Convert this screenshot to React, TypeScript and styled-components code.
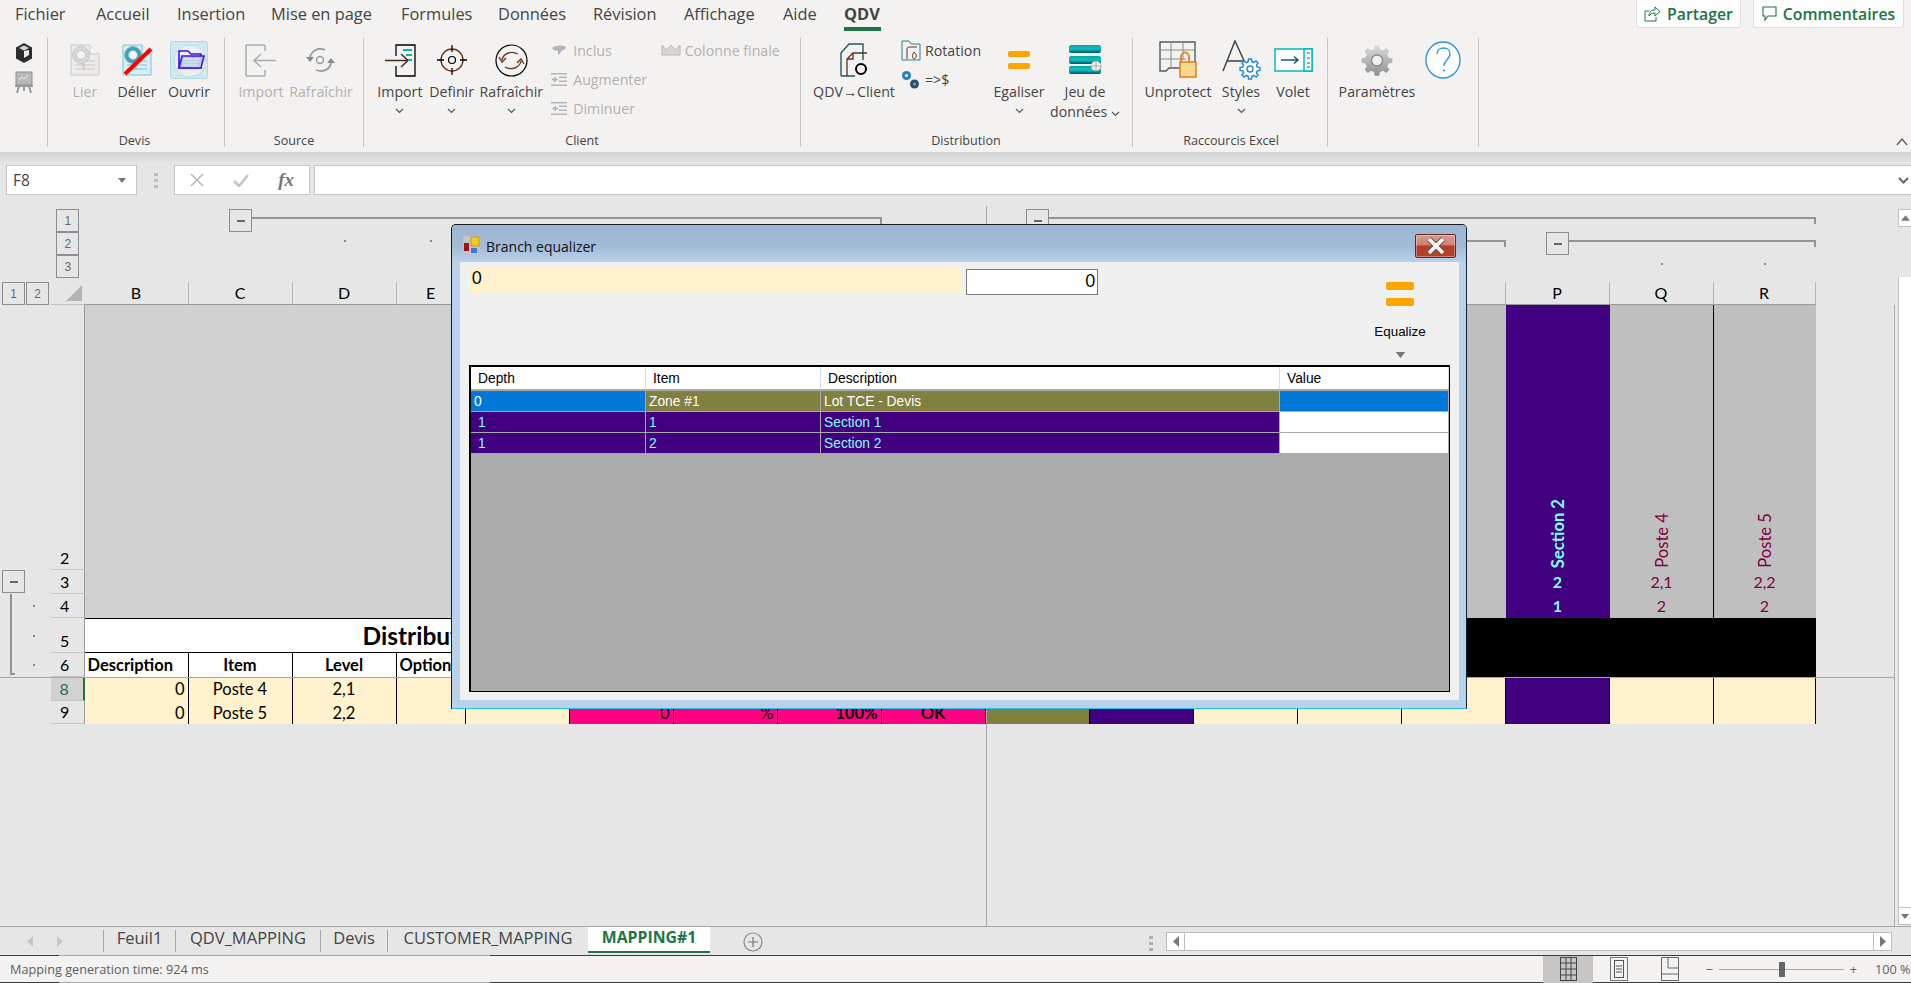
import React from "react";
import styled, { createGlobalStyle } from "styled-components";

const UI = '"Open Sans","Noto Sans",sans-serif';
const CELL = '"Lato","Liberation Sans",sans-serif';
const WIN = '"Liberation Sans",Arial,sans-serif';
const GREEN = "#217346";
const PURPLE = "#400080";
const OLIVE = "#808040";
const PINK = "#ff0080";
const CREAM = "#fff2cc";
const CYAN = "#80ffff";
const CRIMSON = "#800040";

const Global = createGlobalStyle`
  html, body { margin: 0; padding: 0; height: 100%; overflow: hidden; background: #e6e6e6; }
  #root { height: 100%; }
  * { box-sizing: border-box; }
`;

const Page = styled.div`
  position: relative;
  width: 1911px;
  height: 983px;
  display: flex;
  flex-direction: column;
  font-family: ${UI};
  overflow: hidden;
  background: #e6e6e6;
`;

/* ---------- top bar ---------- */
const TopBar = styled.header`
  height: 152px;
  flex: none;
  background: #f3f2f1;
  display: flex;
  flex-direction: column;
`;
const TabRow = styled.nav`
  height: 36px;
  display: flex;
  padding: 0 7px 0 15px;
`;
const MenuTab = styled.div<{ $w: number; $on?: boolean }>`
  width: ${(p) => p.$w}px;
  height: 28px;
  font-size: 16.4px;
  line-height: 27px;
  color: #444;
  font-weight: ${(p) => (p.$on ? 700 : 400)};
  position: relative;
  white-space: nowrap;
  ${(p) => p.$on && `&::after{content:"";position:absolute;left:0;top:27px;width:37px;height:4px;background:${GREEN};}`}
`;
const ShareButton = styled.div<{ $w: number; $first?: boolean }>`
  width: ${(p) => p.$w}px;
  height: 28px;
  margin-left: ${(p) => (p.$first ? "auto" : "12px")};
  background: #fdfdfd;
  border: 1px solid #e1dfdd;
  border-top: none;
  border-radius: 0 0 3px 3px;
  display: flex;
  align-items: center;
  justify-content: center;
  gap: 6px;
  color: ${GREEN};
  font-size: 15.8px;
  font-weight: 600;
  white-space: nowrap;
`;

/* ---------- ribbon ---------- */
const Ribbon = styled.div`
  height: 111px;
  padding-top: 2px;
  display: flex;
`;
const MiniColumn = styled.div`
  width: 48px;
  height: 109px;
  border-right: 1px solid #c8c6c4;
  display: flex;
  flex-direction: column;
  align-items: center;
`;
const MiniIcon = styled.div`
  height: 29px;
  width: 48px;
  display: flex;
  align-items: center;
  justify-content: center;
`;
const Group = styled.section<{ $w: number; $pad: number }>`
  width: ${(p) => p.$w}px;
  height: 109px;
  padding-left: ${(p) => p.$pad}px;
  border-right: 1px solid #c8c6c4;
  display: flex;
  flex-direction: column;
`;
const GroupBody = styled.div`
  display: flex;
  flex: none;
  height: 94px;
`;
const GroupLabel = styled.div<{ $shift?: number }>`
  flex: none;
  height: 15px;
  font-size: 12.6px;
  line-height: 17px;
  color: #444;
  text-align: center;
  white-space: nowrap;
  transform: translateX(${(p) => p.$shift || 0}px);
`;
const BigButton = styled.div<{ $w: number; $off?: boolean }>`
  width: ${(p) => p.$w}px;
  display: flex;
  flex-direction: column;
  align-items: center;
  color: ${(p) => (p.$off ? "#b3b0ad" : "#444")};
  font-size: 14.2px;
`;
const BigIcon = styled.div`
  height: 44px;
  width: 100%;
  display: flex;
  align-items: center;
  justify-content: center;
`;
const BigLabel = styled.div`
  line-height: 20px;
  height: 20px;
  white-space: nowrap;
  text-align: center;
`;
const ChevronRow = styled.div`
  height: 17px;
  display: flex;
  align-items: center;
  justify-content: center;
`;
const SmallColumn = styled.div<{ $w: number; $gap?: number }>`
  width: ${(p) => p.$w}px;
  margin-left: ${(p) => p.$gap || 0}px;
  margin-top: -2px;
  display: flex;
  flex-direction: column;
`;
const SmallItem = styled.div<{ $off?: boolean }>`
  height: 29px;
  display: flex;
  align-items: center;
  gap: 4px;
  font-size: 14.2px;
  color: ${(p) => (p.$off ? "#b3b0ad" : "#444")};
  white-space: nowrap;
`;
const SmallGlyph = styled.span`
  width: 20px;
  display: flex;
  justify-content: center;
  flex: none;
`;
const Collapse = styled.div`
  margin-left: auto;
  margin-right: 3px;
  align-self: flex-end;
  padding-bottom: 1px;
  display: flex;
`;

/* ---------- formula bar ---------- */
const FormulaBar = styled.div`
  height: 43px;
  flex: none;
  padding: 13px 0 0 6px;
  display: flex;
  background: linear-gradient(#d2d2d2, #e6e6e6 12px);
`;
const NameBox = styled.div`
  width: 131px;
  height: 30px;
  background: #fff;
  border: 1px solid #c8c6c4;
  display: flex;
  align-items: center;
  justify-content: space-between;
  padding: 0 10px 0 6px;
  font-size: 15.5px;
  color: #444;
`;
const GripSlot = styled.div`
  width: 37px;
  height: 30px;
  display: flex;
  align-items: center;
  justify-content: center;
`;
const FxBox = styled.div`
  width: 136px;
  height: 30px;
  background: #fff;
  border: 1px solid #c8c6c4;
  display: flex;
  align-items: center;
  justify-content: space-between;
  padding: 0 15px;
  margin-right: 4px;
`;
const FormulaInput = styled.div`
  flex: 1;
  height: 30px;
  background: #fdfdfd;
  border: 1px solid #c8c6c4;
  border-right: none;
  display: flex;
  align-items: center;
  justify-content: flex-end;
  padding-right: 2px;
`;
const FxText = styled.span`
  font-family: "Liberation Serif", serif;
  font-style: italic;
  font-weight: 700;
  font-size: 19px;
  color: #777;
`;

/* ---------- sheet ---------- */
const SheetRow = styled.div`
  flex: 1;
  display: flex;
  min-height: 0;
`;
const Sheet = styled.div`
  width: 1895px;
  display: grid;
  grid-template-columns: 51px 33.5px 104px 104px 104px 69px repeat(12, 104px) 102px 1fr;
  grid-template-rows: 14px 23px 23px 23px 4px 23px 265px 24px 24px 35px 24px 24px 23px 1fr;
  font-family: ${CELL};
`;
type Place = { $c: number | string; $r: number | string };
const OutlineBox = styled.div<Place & { $left?: number }>`
  grid-column: ${(p) => p.$c};
  grid-row: ${(p) => p.$r};
  width: 23px;
  height: 23px;
  margin-left: ${(p) => (p.$left === undefined ? "auto" : p.$left + "px")};
  margin-right: ${(p) => (p.$left === undefined ? "auto" : "0")};
  border: 1px solid #8d8d93;
  background: #e6e6e6;
  color: #666;
  font: 12px ${WIN};
  display: flex;
  align-items: center;
  justify-content: center;
  z-index: 2;
`;
const RowLevels = styled.div`
  grid-column: 1;
  grid-row: 6;
  display: flex;
  gap: 1px;
  padding-left: 2px;
`;
const LevelBtn = styled(OutlineBox).attrs({ $c: "auto", $r: "auto", $left: 0 })``;
const MinusMark = styled.span`
  width: 8px;
  height: 2px;
  background: #666;
`;
const Bracket = styled.div<Place & { $inset: number }>`
  grid-column: ${(p) => p.$c};
  grid-row: ${(p) => p.$r};
  margin: 8px 0 0 ${(p) => p.$inset}px;
  height: 7px;
  border-top: 2px solid #949494;
  border-right: 2px solid #949494;
`;
const LevelDot = styled.div<Place>`
  grid-column: ${(p) => p.$c};
  grid-row: ${(p) => p.$r};
  width: 2px;
  height: 2px;
  background: #8a8a8a;
  margin: 8px auto 0;
`;
const RowDot = styled.div<{ $r: number }>`
  grid-column: 1;
  grid-row: ${(p) => p.$r};
  width: 2px;
  height: 2px;
  background: #8a8a8a;
  margin: auto 0 auto 33px;
`;
const RowBracket = styled.div`
  grid-column: 1;
  grid-row: 9 / 12;
  margin: 0 0 2px 10px;
  width: 5px;
  border-left: 2px solid #949494;
  border-bottom: 2px solid #949494;
`;
const Corner = styled.div`
  grid-column: 2;
  grid-row: 6;
  display: flex;
  align-items: center;
  justify-content: flex-end;
  padding-right: 3px;
  border-bottom: 1px solid #c0c0c0;
`;
const ColHead = styled.div<{ $c: number }>`
  grid-column: ${(p) => p.$c};
  grid-row: 6;
  border-right: 1px solid #b4b4b4;
  border-bottom: 1px solid #9a9a9a;
  font-size: 16px;
  color: #000;
  text-align: center;
  line-height: 21px;
`;
const RowHead = styled.div<{ $r: number; $on?: boolean }>`
  grid-column: 2;
  grid-row: ${(p) => p.$r};
  border-right: ${(p) => (p.$on ? `2px solid ${GREEN}` : "1px solid #9a9a9a")};
  border-bottom: 1px solid #c6c6c6;
  background: ${(p) => (p.$on ? "#d2d2d2" : "transparent")};
  color: ${(p) => (p.$on ? GREEN : "#000")};
  font-size: 16px;
  text-align: center;
  padding-right: 5px;
  display: flex;
  align-items: flex-end;
  justify-content: center;
  line-height: 22px;
`;
const Block = styled.div<Place & { $bg: string; $lineRight?: boolean }>`
  grid-column: ${(p) => p.$c};
  grid-row: ${(p) => p.$r};
  background: ${(p) => p.$bg};
  ${(p) => p.$lineRight && "border-right: 1px solid #000;"}
`;
const Value = styled.div<{ $c: number; $r: number; $color: string; $bold?: boolean }>`
  grid-column: ${(p) => p.$c};
  grid-row: ${(p) => p.$r};
  color: ${(p) => p.$color};
  font-size: 16px;
  font-weight: ${(p) => (p.$bold ? 700 : 400)};
  text-align: center;
  line-height: 24px;
`;
const VerticalLabel = styled.div<{ $c: number; $color: string; $bold?: boolean }>`
  grid-column: ${(p) => p.$c};
  grid-row: 7;
  display: flex;
  justify-content: center;
  align-items: flex-end;
  padding-bottom: 2px;
  span {
    writing-mode: vertical-rl;
    transform: rotate(180deg);
    color: ${(p) => p.$color};
    font-size: 16.6px;
    font-weight: ${(p) => (p.$bold ? 700 : 400)};
    white-space: nowrap;
  }
`;
const TitleCell = styled.div`
  grid-column: 3 / 12;
  grid-row: 10;
  background: #fff;
  border-top: 1px solid #000;
  border-bottom: 1px solid #000;
  padding-left: 278px;
  font-size: 24.5px;
  font-weight: 700;
  color: #000;
  line-height: 33px;
  white-space: nowrap;
`;
const HeadCell = styled.div<{ $c: number; $left?: boolean }>`
  grid-column: ${(p) => p.$c};
  grid-row: 11;
  background: #fff;
  border-right: 1px solid #000;
  font-size: 16.5px;
  font-weight: 700;
  color: #000;
  line-height: 24px;
  text-align: ${(p) => (p.$left ? "left" : "center")};
  padding-left: ${(p) => (p.$left ? "3px" : "0")};
  white-space: nowrap;
  overflow: hidden;
`;
const DataCell = styled.div<{ $c: number; $r: number; $bg: string; $align?: string; $bold?: boolean }>`
  grid-column: ${(p) => p.$c};
  grid-row: ${(p) => p.$r};
  background: ${(p) => p.$bg};
  border-right: 1px solid #000;
  font-size: 16.5px;
  font-weight: ${(p) => (p.$bold ? 700 : 400)};
  color: #000;
  line-height: 24px;
  text-align: ${(p) => p.$align || "center"};
  padding: 0 3px;
  white-space: nowrap;
`;
const SplitH = styled.div`
  grid-column: 1 / -1;
  grid-row: 12;
  height: 1px;
  background: #a6a6a6;
  z-index: 1;
`;
const SplitV = styled.div`
  grid-column: 12;
  grid-row: 1 / -1;
  width: 1px;
  margin-top: 11px;
  background: #a6a6a6;
  z-index: 1;
`;
const SheetEdge = styled.div`
  grid-column: 20;
  grid-row: 7 / -1;
  border-right: 1px solid #b0b0b0;
`;
const VScroll = styled.aside`
  width: 16px;
  padding: 14px 0 1px 3px;
  display: flex;
  flex-direction: column;
`;
const VArrow = styled.div`
  height: 18px;
  flex: none;
  background: #fff;
  border: 1px solid #c0c0c0;
  border-right: none;
  display: flex;
  align-items: center;
  justify-content: center;
`;
const VGap = styled.div`
  height: 50px;
  flex: none;
  background: #e6e6e6;
`;
const VThumb = styled.div`
  flex: 1;
  background: #fff;
  border-left: 1px solid #c0c0c0;
`;

/* ---------- sheet tabs ---------- */
const SheetTabs = styled.div`
  height: 29px;
  flex: none;
  border-top: 1px solid #a6a6a6;
  display: flex;
  background: #e6e6e6;
  padding-right: 19px;
`;
const NavArrows = styled.div`
  width: 103px;
  display: flex;
  align-items: center;
  gap: 24px;
  padding-left: 27px;
`;
const SheetTab = styled.div<{ $w: number; $on?: boolean }>`
  width: ${(p) => p.$w}px;
  height: ${(p) => (p.$on ? "26px" : "22px")};
  margin-top: ${(p) => (p.$on ? "0" : "3px")};
  border-left: ${(p) => (p.$on ? "none" : "1px solid #a6a6a6")};
  border-bottom: ${(p) => (p.$on ? `2px solid ${GREEN}` : "none")};
  background: ${(p) => (p.$on ? "#fff" : "transparent")};
  color: ${(p) => (p.$on ? GREEN : "#444")};
  font-weight: ${(p) => (p.$on ? 700 : 400)};
  font-size: ${(p) => (p.$on ? 15.8 : 16.5)}px;
  line-height: ${(p) => (p.$on ? "21px" : "16px")};
  text-align: center;
  white-space: nowrap;
`;
const AddSheet = styled.div`
  width: 20px;
  height: 20px;
  margin: 5px 0 0 33px;
`;
const Grip = styled.div`
  margin: 7px 13px 0 auto;
`;
const HScroll = styled.div`
  width: 726px;
  height: 19px;
  margin-top: 5px;
  background: #fff;
  border: 1px solid #bdbdbd;
  display: flex;
  justify-content: space-between;
`;
const HArrow = styled.div<{ $right?: boolean }>`
  width: 18px;
  display: flex;
  align-items: center;
  justify-content: center;
  ${(p) => (p.$right ? "border-left: 1px solid #bdbdbd;" : "border-right: 1px solid #bdbdbd;")}
`;

/* ---------- status bar ---------- */
const StatusBar = styled.footer`
  height: 28px;
  flex: none;
  background: #f3f2f1;
  border-top: 1px solid #d8d8d8;
  border-bottom: 1px solid;
  border-image: linear-gradient(to right, #3c3c3c 60px, #a8a8a8 60px, #a8a8a8 490px, #3c3c3c 490px) 1;
  display: flex;
  align-items: center;
  padding-left: 10px;
  font-size: 12.7px;
  color: #605e5c;
`;
const ViewButton = styled.div<{ $on?: boolean; $first?: boolean }>`
  width: ${(p) => (p.$on ? 50 : 51)}px;
  height: 27px;
  margin-left: ${(p) => (p.$first ? "auto" : "0")};
  background: ${(p) => (p.$on ? "#c8c6c4" : "transparent")};
  display: flex;
  align-items: center;
  justify-content: center;
`;
const ZoomControl = styled.div`
  display: flex;
  align-items: center;
  margin-left: 10px;
  gap: 6px;
`;
const ZoomTrack = styled.div`
  width: 125px;
  height: 1px;
  background: #a6a6a6;
  position: relative;
`;
const ZoomThumb = styled.span`
  position: absolute;
  left: 60px;
  top: -7px;
  width: 6px;
  height: 15px;
  background: #666;
`;
const ZoomText = styled.div`
  width: 54px;
  padding-left: 18px;
  white-space: nowrap;
`;

/* ---------- dialog ---------- */
const Dialog = styled.div`
  position: absolute;
  left: 451px;
  top: 224px;
  width: 1016px;
  height: 485px;
  background: #b9d1ea;
  border: 1px solid #1a1a1a;
  border-bottom: 1px solid #25c4e4;
  border-right: 1px solid #123;
  border-radius: 5px 5px 0 0;
  display: flex;
  flex-direction: column;
  z-index: 5;
`;
const DialogTitle = styled.div`
  height: 37px;
  flex: none;
  display: flex;
  align-items: center;
  padding: 0 10px 0 11px;
  gap: 6px;
  background: linear-gradient(#9bb5d2, #a4bcd7 60%, #b9d1ea);
  border-radius: 4px 4px 0 0;
  font-size: 14px;
  color: #111;
`;
const TitleText = styled.span`
  padding-top: 5px;
`;
const TitleGlyph = styled.span`
  padding-top: 3px;
  display: flex;
`;
const CloseButton = styled.div`
  margin-left: auto;
  width: 41px;
  height: 24px;
  margin-top: 4px;
  border: 1px solid #5b2b2b;
  border-radius: 2px;
  background: linear-gradient(#dd9a90, #cf8070 45%, #b53d24 50%, #b5412a);
  box-shadow: inset 0 0 0 1px rgba(255, 255, 255, 0.35);
  display: flex;
  align-items: center;
  justify-content: center;
`;
const DialogBody = styled.div`
  flex: 1;
  margin: 0 7px 8px 8px;
  background: #f0f0f0;
  padding: 6px 9px 8px;
  display: flex;
  flex-direction: column;
  font-family: ${WIN};
`;
const DialogTop = styled.div`
  height: 97px;
  flex: none;
  display: flex;
  align-items: flex-start;
`;
const NameLabel = styled.div`
  width: 493px;
  height: 25px;
  background: ${CREAM};
  padding-left: 3px;
  font: 16.5px/21px ${CELL};
  color: #000;
`;
const ValueInput = styled.div`
  width: 132px;
  height: 26px;
  margin: 1px 0 0 4px;
  background: #fff;
  border: 1px solid #7a7a7a;
  font: 16.5px/23px ${CELL};
  text-align: right;
  padding-right: 2px;
  color: #000;
`;
const EqualizeButton = styled.div`
  margin-left: auto;
  margin-right: 20px;
  width: 60px;
  display: flex;
  flex-direction: column;
  align-items: center;
  font-size: 13.4px;
  color: #000;
`;
const EqualizeIcon = styled.div`
  height: 56px;
  padding-top: 14px;
`;
const EqualizeLabel = styled.div`
  height: 16px;
  line-height: 16px;
`;
const EqualizeCaret = styled.div`
  margin-top: 6px;
`;
const GridView = styled.div`
  flex: 1;
  background: #ababab;
  border: 2px solid #000;
  border-bottom-width: 1px;
  border-right-width: 1px;
  font-size: 13.8px;
`;
const GridRow = styled.div<{ $head?: boolean }>`
  display: grid;
  grid-template-columns: 175px 175px 459px 169px;
  height: ${(p) => (p.$head ? 24 : 21)}px;
  border-bottom: ${(p) => (p.$head ? 2 : 1)}px solid #a9a9a9;
`;
const HeaderCell = styled.div`
  height: 22px;
  overflow: hidden;
  background: #fff;
  color: #000;
  border-right: 1px solid #ddd;
  padding-left: 7px;
  line-height: 24px;
`;
const RowCell = styled.div<{ $bg: string; $color: string; $pad?: number }>`
  height: 20px;
  overflow: hidden;
  background: ${(p) => p.$bg};
  color: ${(p) => p.$color};
  border-right: 1px solid #a9a9a9;
  padding-left: ${(p) => p.$pad ?? 3}px;
  line-height: 21px;
  white-space: nowrap;
`;

/* ---------- icons ---------- */
function gear(cx: number, cy: number, R: number, r: number, n: number) {
  const pts: string[] = [];
  for (let i = 0; i < n; i++) {
    const a = (i / n) * Math.PI * 2;
    const s = (Math.PI * 2) / n;
    const at = (rad: number, ang: number) =>
      `${(cx + rad * Math.cos(ang)).toFixed(2)},${(cy + rad * Math.sin(ang)).toFixed(2)}`;
    pts.push(at(r, a - s * 0.32), at(R, a - s * 0.18), at(R, a + s * 0.18), at(r, a + s * 0.32));
  }
  return pts.join(" ");
}

const Chevron = () => (
  <svg width="9" height="6" viewBox="0 0 9 6">
    <path d="M1 1l3.5 3.5L8 1" fill="none" stroke="#555" strokeWidth="1.2" />
  </svg>
);
const Cube = () => (
  <svg width="18" height="22" viewBox="0 0 18 22">
    <path d="M9 1l8 4.5v11L9 21l-8-4.5v-11z" fill="#2d2d2d" />
    <path d="M4 6l5-2.5L14 6 9 8.5z" fill="#d8d8d8" />
    <path d="M9 9v7l5-3V8z" fill="#eee" />
  </svg>
);
const BoardIcon = () => (
  <svg width="20" height="22" viewBox="0 0 20 22">
    <rect x="2" y="1" width="16" height="13" fill="#b9b9b9" stroke="#8e8e8e" />
    <path d="M5 9l3-3 2 2 4-4" stroke="#eee" fill="none" />
    <path d="M1 15h18M5 15l-2 7M15 15l2 7M10 15v5" stroke="#9a9a9a" strokeWidth="2" fill="none" />
  </svg>
);
const DocBase = ({ paper, edge, lens, children }: { paper: string; edge: string; lens: string; children?: React.ReactNode }) => (
  <svg width="32" height="32" viewBox="0 0 32 32">
    <path d="M2 1h19l9 9v21H2z" fill={paper} stroke={edge} />
    <path d="M21 1v9h9" fill="#f4f4f4" stroke={edge} />
    <path d="M6 17h20M6 21h20M6 25h20" stroke={edge} />
    <circle cx="12" cy="11" r="8.5" fill={lens} stroke={edge} />
    <circle cx="12" cy="11" r="4.5" fill="#f4f4f4" stroke={edge} />
    <path d="M14 19l1 7" stroke={edge} strokeWidth="2" />
    {children}
  </svg>
);
const LierIcon = () => <DocBase paper="#eeecea" edge="#c9c9c9" lens="#d8d8d8" />;
const DelierIcon = () => (
  <DocBase paper="#d8f0f5" edge="#7fc4cf" lens="#3f9fb0">
    <path d="M4 30L30 5" stroke="#f00" strokeWidth="4" />
  </DocBase>
);
const OpenIcon = () => (
  <svg width="38" height="38" viewBox="0 0 38 38">
    <rect x="0.5" y="0.5" width="37" height="37" rx="2" fill="#cdeaf0" stroke="#aedbe2" />
    <circle cx="20" cy="20" r="16" fill="#e9eff2" stroke="#c8d8dc" />
    <path d="M9 27V10h9l3 3h10v14z" fill="#eee" stroke="#3b12e8" strokeWidth="1.6" />
    <path d="M9 27l3-12h22l-3 12z" fill="#b7cbe8" stroke="#3b12e8" strokeWidth="1.6" />
    <path d="M14 18h16M13 21h16M12 24h16" stroke="#e4eef6" />
  </svg>
);
const ImportOff = () => (
  <svg width="32" height="33" viewBox="0 0 32 33">
    <path d="M20 1H1v31h19M20 1v6M20 26v6" fill="none" stroke="#8a8a8a" />
    <path d="M31 16.5H10M16 10l-7 6.5 7 6.5" fill="none" stroke="#aaa" strokeWidth="1.4" />
  </svg>
);
const RefreshOff = () => (
  <svg width="32" height="28" viewBox="0 0 32 28">
    <circle cx="15" cy="14" r="3.5" fill="none" stroke="#9a9a9a" strokeWidth="1.4" />
    <path d="M5 12C6 5 13 1 20 4" fill="none" stroke="#9a9a9a" strokeWidth="1.8" />
    <path d="M26 17c-1 6-8 10-15 7" fill="none" stroke="#9a9a9a" strokeWidth="1.8" />
    <path d="M1 11h8l-4 5zM22 17h8l-4-5z" fill="#8a8a8a" />
  </svg>
);
const ImportOn = () => (
  <svg width="32" height="33" viewBox="0 0 32 33">
    <path d="M12 12V1h19v31H12V22" fill="none" stroke="#000" strokeWidth="1.3" />
    <path d="M1 16.5h23M17 10l7 6.5-7 6.5" fill="none" stroke="#4a2a1a" strokeWidth="1.5" />
    <path d="M19 5h9v2h-9zM22 10h6v2h-6zM24 15h4v2h-4z" fill="#00b8b8" />
  </svg>
);
const TargetIcon = () => (
  <svg width="32" height="32" viewBox="0 0 32 32">
    <circle cx="16" cy="16" r="11" fill="none" stroke="#6b3a1e" strokeWidth="1.4" />
    <circle cx="16" cy="16" r="3.5" fill="none" stroke="#000" strokeWidth="1.2" />
    <path d="M16 1v7M16 24v7M1 16h7M24 16h7" stroke="#000" strokeWidth="1.3" />
  </svg>
);
const RefreshOn = () => (
  <svg width="33" height="33" viewBox="0 0 33 33">
    <circle cx="16.5" cy="16.5" r="15.5" fill="none" stroke="#000" strokeWidth="1.2" />
    <path d="M7 16c1-6 9-10 16-6" fill="none" stroke="#6b3a1e" strokeWidth="1.4" />
    <path d="M26 17c-1 6-9 10-16 6" fill="none" stroke="#6b3a1e" strokeWidth="1.4" />
    <path d="M4 13l3 5 4-4M22 19l4-4 3 5" fill="none" stroke="#6b3a1e" strokeWidth="1.4" />
  </svg>
);
const CapIcon = () => (
  <svg width="16" height="12" viewBox="0 0 16 12">
    <path d="M1 3c4-3 10-3 14-1-1 3-3 3-5 4 0 2-2 3-3 4V6C4 6 2 5 1 3z" fill="#b5b5b5" />
  </svg>
);
const IndentIcon = ({ out }: { out?: boolean }) => (
  <svg width="16" height="15" viewBox="0 0 16 15">
    <path d="M0 1h16v1.6H0zM0 12.4h16V14H0zM8 4.5h8V6H8zM8 8.5h8V10H8z" fill="#b5b5b5" />
    <path d={out ? "M1 7.5L5 4.5v2h2v2H5v2z" : "M7 7.5L3 4.5v2H1v2h2v2z"} fill="#b5b5b5" />
  </svg>
);
const CrownIcon = () => (
  <svg width="20" height="13" viewBox="0 0 20 13">
    <path d="M1 1l4 5 5-5 5 5 4-5v10H1z" fill="#d8d6d4" stroke="#b5b5b5" />
  </svg>
);
const QdvClientIcon = () => (
  <svg width="30" height="34" viewBox="0 0 30 34">
    <path d="M2 33V10l8-9h14v16M2 33h14" fill="none" stroke="#1e5a66" strokeWidth="1.4" />
    <path d="M8 33V16l6-6h14M8 16h6v-6" fill="none" stroke="#5a3520" strokeWidth="1.3" />
    <circle cx="22" cy="26" r="5" fill="none" stroke="#000" strokeWidth="2" />
  </svg>
);
const RotationIcon = () => (
  <svg width="20" height="21" viewBox="0 0 20 21">
    <path d="M1 20V1h7l2 3h9v16z" fill="#f3f2f1" stroke="#2f7f8f" />
    <path d="M6 19V9c0-2 2-2 3-2h7" fill="none" stroke="#5a3520" />
    <path d="M13 12c3 2 3 6 0 7-2-1-2-4 0-7z" fill="none" stroke="#5a3520" />
  </svg>
);
const CoinsIcon = () => (
  <svg width="20" height="20" viewBox="0 0 20 20">
    <circle cx="5.5" cy="5.5" r="4.5" fill="#2a7fc0" />
    <circle cx="5.5" cy="5.5" r="1.6" fill="#e8f2fa" />
    <circle cx="13.5" cy="14" r="4.5" fill="#1d4f7a" />
    <circle cx="13.5" cy="14" r="1.6" fill="#d08a3a" />
  </svg>
);
const EqualBars = ({ w = 22, h = 18, b = 6, gap = 6 }: { w?: number; h?: number; b?: number; gap?: number }) => (
  <svg width={w} height={h} viewBox={`0 0 ${w} ${h}`}>
    <rect width={w} height={b} rx="2" fill="#ffa500" />
    <rect y={b + gap} width={w} height={b} rx="2" fill="#ffa500" />
  </svg>
);
const StackIcon = () => (
  <svg width="34" height="30" viewBox="0 0 34 30">
    <defs>
      <linearGradient id="tl" x1="0" x2="0" y1="0" y2="1">
        <stop offset="0" stopColor="#00a5a8" />
        <stop offset="0.5" stopColor="#0fc0bd" />
        <stop offset="1" stopColor="#064f63" />
      </linearGradient>
    </defs>
    <rect x="1" y="0" width="32" height="8" rx="2" fill="url(#tl)" />
    <rect x="1" y="11" width="32" height="8" rx="2" fill="url(#tl)" />
    <rect x="1" y="21" width="32" height="8" rx="2" fill="url(#tl)" />
    <circle cx="28" cy="21" r="5" fill="#f3f2f1" stroke="#999" strokeDasharray="1.5 1" />
    <path d="M28 16v10M23 21h10" stroke="#999" strokeWidth="0.8" />
  </svg>
);
const LockGridIcon = () => (
  <svg width="38" height="38" viewBox="0 0 38 38">
    <path d="M1 1h35v26H10l-3 3H1z" fill="#f3f2f1" stroke="#5a5a5a" strokeWidth="1.4" />
    <path d="M12 1v26M24 1v18M1 9h35M1 18h26" stroke="#8a8a8a" />
    <path d="M22 21v-5c0-6 8-6 8 0v5" fill="none" stroke="#e58a2e" strokeWidth="2" />
    <rect x="21" y="21" width="16" height="15" fill="#f8d88c" stroke="#e07b20" strokeWidth="1.5" />
  </svg>
);
const StylesIcon = () => (
  <svg width="40" height="40" viewBox="0 0 40 40">
    <path d="M2 31L14 1l11 24M6 21h16" fill="none" stroke="#444" strokeWidth="1.5" />
    <polygon points={gear(29, 29, 10, 7.5, 8)} fill="#fff" stroke="#2b88d8" strokeWidth="1.5" />
    <circle cx="29" cy="29" r="3" fill="none" stroke="#2b88d8" strokeWidth="1.4" />
  </svg>
);
const VoletIcon = () => (
  <svg width="39" height="24" viewBox="0 0 39 24">
    <rect x="1" y="1" width="37" height="22" fill="#fff" stroke="#00bcbc" strokeWidth="1.5" />
    <rect x="30" y="1" width="8" height="22" fill="#fff" stroke="#00bcbc" strokeWidth="1.5" />
    <path d="M7 12h17M20 8.5l4 3.5-4 3.5" fill="none" stroke="#1d5a66" strokeWidth="1.5" />
    <path d="M33 5h3M33 10h3M33 15h3M33 19h3" stroke="#1d5a66" />
  </svg>
);
const SettingsIcon = () => (
  <svg width="32" height="33" viewBox="0 0 32 33">
    <defs>
      <linearGradient id="gg" x1="0" x2="0" y1="0" y2="1">
        <stop offset="0" stopColor="#dcdcdc" />
        <stop offset="1" stopColor="#8f8f8f" />
      </linearGradient>
    </defs>
    <polygon points={gear(16, 16.5, 15.5, 12, 8)} fill="url(#gg)" />
    <circle cx="16" cy="16.5" r="5.5" fill="#f0f0f0" stroke="#8a8a8a" strokeWidth="1.4" />
  </svg>
);
const HelpIcon = () => (
  <svg width="36" height="38" viewBox="0 0 36 38">
    <ellipse cx="18" cy="19" rx="17" ry="18" fill="#fff" stroke="#2b97d8" strokeWidth="1.4" />
    <path d="M12 13c0-8 13-8 13 0 0 5-6 6-6 12" fill="none" stroke="#2b97d8" strokeWidth="1.4" />
    <circle cx="19" cy="29.5" r="1.1" fill="#2b97d8" />
  </svg>
);
const ShareIcon = () => (
  <svg width="17" height="16" viewBox="0 0 17 16">
    <path d="M1 5h4M1 5v10h11v-4" fill="none" stroke={GREEN} />
    <path d="M5 10c0-4 2-6 6-6V1l5 4.5L11 10V7C8 7 6 8 5 10z" fill="none" stroke={GREEN} />
  </svg>
);
const CommentIcon = () => (
  <svg width="15" height="16" viewBox="0 0 15 16">
    <path d="M1 1h13v9H6l-3 4v-4H1z" fill="none" stroke={GREEN} strokeWidth="1.1" />
  </svg>
);
const Caret = ({ c = "#777", w = 8, h = 5 }: { c?: string; w?: number; h?: number }) => (
  <svg width={w} height={h} viewBox="0 0 8 5">
    <path d="M0 0h8L4 5z" fill={c} />
  </svg>
);
const UpCaret = () => (
  <svg width="9" height="6" viewBox="0 0 8 5">
    <path d="M0 5h8L4 0z" fill="#777" />
  </svg>
);
const Tri = ({ left }: { left?: boolean }) => (
  <svg width="6" height="11" viewBox="0 0 6 11">
    <path d={left ? "M6 0v11L0 5.5z" : "M0 0v11l6-5.5z"} fill="#777" />
  </svg>
);
const FaintTri = ({ left }: { left?: boolean }) => (
  <svg width="6" height="11" viewBox="0 0 6 11">
    <path d={left ? "M6 0v11L0 5.5z" : "M0 0v11l6-5.5z"} fill="#c6c6c6" />
  </svg>
);
const GripDots = ({ c = "#b0b0b0" }: { c?: string }) => (
  <svg width="4" height="15" viewBox="0 0 4 15">
    <rect width="4" height="3" fill={c} />
    <rect y="6" width="4" height="3" fill={c} />
    <rect y="12" width="4" height="3" fill={c} />
  </svg>
);
const CrossIcon = () => (
  <svg width="14" height="14" viewBox="0 0 14 14">
    <path d="M1 1l12 12M13 1L1 13" stroke="#b8b8b8" strokeWidth="1.6" />
  </svg>
);
const CheckIcon = () => (
  <svg width="16" height="13" viewBox="0 0 16 13">
    <path d="M1 7l5 5L15 1" fill="none" stroke="#c4c4c4" strokeWidth="2.6" />
  </svg>
);
const DownChevronBold = () => (
  <svg width="11" height="7" viewBox="0 0 11 7">
    <path d="M1 1l4.5 4.5L10 1" fill="none" stroke="#666" strokeWidth="2" />
  </svg>
);
const CornerTri = () => (
  <svg width="16" height="16" viewBox="0 0 16 16">
    <path d="M16 0v16H0z" fill="#b4b4b4" />
  </svg>
);
const PlusCircle = () => (
  <svg width="20" height="20" viewBox="0 0 20 20">
    <circle cx="10" cy="10" r="9" fill="none" stroke="#888" strokeWidth="1.2" />
    <path d="M10 5v10M5 10h10" stroke="#777" strokeWidth="1.2" />
  </svg>
);
const GridViewIcon = () => (
  <svg width="17" height="24" viewBox="0 0 17 24">
    <rect x="0.5" y="0.5" width="16" height="23" fill="none" stroke="#444" />
    <path d="M6 0v24M11 0v24M0 6h17M0 12h17M0 18h17" stroke="#444" />
  </svg>
);
const PageViewIcon = () => (
  <svg width="18" height="24" viewBox="0 0 18 24">
    <rect x="0.5" y="0.5" width="17" height="23" fill="none" stroke="#777" />
    <rect x="4.5" y="3.5" width="9" height="17" fill="none" stroke="#555" />
    <path d="M6 9h6M6 12h6M6 15h6" stroke="#555" />
  </svg>
);
const BreakViewIcon = () => (
  <svg width="18" height="24" viewBox="0 0 18 24">
    <path d="M0.5 0.5h17v23H0.5zM0.5 17h17M7 .5V11h10" fill="none" stroke="#666" />
  </svg>
);
const WinIcon = () => (
  <svg width="17" height="18" viewBox="0 0 17 18">
    <rect width="17" height="18" fill="#c4c4c4" />
    <rect x="1" y="7" width="5" height="8" fill="#a81010" />
    <rect x="8" y="1" width="8" height="9" fill="#f7c91a" stroke="#a88a10" strokeWidth="0.7" />
    <rect x="8" y="12" width="6" height="5" fill="#3f78d8" />
  </svg>
);
const CloseX = () => (
  <svg width="20" height="18" viewBox="0 0 20 18">
    <path d="M3 2l14 14M17 2L3 16" stroke="#555" strokeWidth="5.4" />
    <path d="M3 2l14 14M17 2L3 16" stroke="#f5f5f5" strokeWidth="3.8" />
  </svg>
);

/* ---------- data ---------- */
const menu: [string, number, boolean?][] = [
  ["Fichier", 81], ["Accueil", 81], ["Insertion", 94], ["Mise en page", 130], ["Formules", 97],
  ["Données", 95], ["Révision", 91], ["Affichage", 99], ["Aide", 61], ["QDV", 60, true],
];
const colLetters = "BCDEFGHIJKLMNOPQR".split("");
const dataCols = [7, 12, 13, 14, 15, 16, 17, 18, 19];
const colBg: Record<number, string> = { 12: OLIVE, 13: PURPLE, 17: PURPLE };
const sheetTabs: [string, number, boolean?][] = [
  ["Feuil1", 72], ["QDV_MAPPING", 145], ["Devis", 67], ["CUSTOMER_MAPPING", 201], ["MAPPING#1", 122, true],
];
const gridRows = [
  { d: "0", i: "Zone #1", t: "Lot TCE - Devis", bg: OLIVE, fg: "#fff", sel: true },
  { d: "1", i: "1", t: "Section 1", bg: PURPLE, fg: CYAN, sel: false },
  { d: "1", i: "2", t: "Section 2", bg: PURPLE, fg: CYAN, sel: false },
];

export default function App() {
  return (
    <Page>
      <Global />
      <TopBar>
        <TabRow>
          {menu.map(([t, w, on]) => (
            <MenuTab key={t} $w={w} $on={on}>{t}</MenuTab>
          ))}
          <ShareButton $w={105} $first><ShareIcon />Partager</ShareButton>
          <ShareButton $w={151}><CommentIcon />Commentaires</ShareButton>
        </TabRow>
        <Ribbon>
          <MiniColumn>
            <MiniIcon><Cube /></MiniIcon>
            <MiniIcon><BoardIcon /></MiniIcon>
          </MiniColumn>
          <Group $w={177} $pad={11}>
            <GroupBody>
              <BigButton $w={52} $off><BigIcon><LierIcon /></BigIcon><BigLabel>Lier</BigLabel></BigButton>
              <BigButton $w={52}><BigIcon><DelierIcon /></BigIcon><BigLabel>Délier</BigLabel></BigButton>
              <BigButton $w={52}><BigIcon><OpenIcon /></BigIcon><BigLabel>Ouvrir</BigLabel></BigButton>
            </GroupBody>
            <GroupLabel $shift={-7}>Devis</GroupLabel>
          </Group>
          <Group $w={139} $pad={6}>
            <GroupBody>
              <BigButton $w={60} $off><BigIcon><ImportOff /></BigIcon><BigLabel>Import</BigLabel></BigButton>
              <BigButton $w={60} $off><BigIcon><RefreshOff /></BigIcon><BigLabel>Rafraîchir</BigLabel></BigButton>
            </GroupBody>
            <GroupLabel $shift={-3}>Source</GroupLabel>
          </Group>
          <Group $w={437} $pad={10}>
            <GroupBody>
              <BigButton $w={52}><BigIcon><ImportOn /></BigIcon><BigLabel>Import</BigLabel><ChevronRow><Chevron /></ChevronRow></BigButton>
              <BigButton $w={52}><BigIcon><TargetIcon /></BigIcon><BigLabel>Definir</BigLabel><ChevronRow><Chevron /></ChevronRow></BigButton>
              <BigButton $w={68}><BigIcon><RefreshOn /></BigIcon><BigLabel>Rafraîchir</BigLabel><ChevronRow><Chevron /></ChevronRow></BigButton>
              <SmallColumn $w={112} $gap={4}>
                <SmallItem $off><SmallGlyph><CapIcon /></SmallGlyph>Inclus</SmallItem>
                <SmallItem $off><SmallGlyph><IndentIcon /></SmallGlyph>Augmenter</SmallItem>
                <SmallItem $off><SmallGlyph><IndentIcon out /></SmallGlyph>Diminuer</SmallItem>
              </SmallColumn>
              <SmallColumn $w={140}>
                <SmallItem $off><SmallGlyph><CrownIcon /></SmallGlyph>Colonne finale</SmallItem>
              </SmallColumn>
            </GroupBody>
            <GroupLabel $shift={-5}>Client</GroupLabel>
          </Group>
          <Group $w={332} $pad={11}>
            <GroupBody>
              <BigButton $w={84}><BigIcon><QdvClientIcon /></BigIcon><BigLabel>QDV→Client</BigLabel></BigButton>
              <SmallColumn $w={88} $gap={5}>
                <SmallItem><SmallGlyph><RotationIcon /></SmallGlyph>Rotation</SmallItem>
                <SmallItem><SmallGlyph><CoinsIcon /></SmallGlyph>=&gt;$</SmallItem>
              </SmallColumn>
              <BigButton $w={60}><BigIcon><EqualBars /></BigIcon><BigLabel>Egaliser</BigLabel><ChevronRow><Chevron /></ChevronRow></BigButton>
              <BigButton $w={72}><BigIcon><StackIcon /></BigIcon><BigLabel>Jeu de</BigLabel><BigLabel>données <Chevron /></BigLabel></BigButton>
            </GroupBody>
            <GroupLabel $shift={-6}>Distribution</GroupLabel>
          </Group>
          <Group $w={195} $pad={4}>
            <GroupBody>
              <BigButton $w={82}><BigIcon><LockGridIcon /></BigIcon><BigLabel>Unprotect</BigLabel></BigButton>
              <BigButton $w={44}><BigIcon><StylesIcon /></BigIcon><BigLabel>Styles</BigLabel><ChevronRow><Chevron /></ChevronRow></BigButton>
              <BigButton $w={60}><BigIcon><VoletIcon /></BigIcon><BigLabel>Volet</BigLabel></BigButton>
            </GroupBody>
            <GroupLabel $shift={-1}>Raccourcis Excel</GroupLabel>
          </Group>
          <Group $w={151} $pad={1}>
            <GroupBody>
              <BigButton $w={96}><BigIcon><SettingsIcon /></BigIcon><BigLabel>Paramètres</BigLabel></BigButton>
              <BigButton $w={36}><BigIcon><HelpIcon /></BigIcon></BigButton>
            </GroupBody>
          </Group>
          <Collapse>
            <svg width="12" height="8" viewBox="0 0 12 8"><path d="M1 7l5-6 5 6" fill="none" stroke="#555" strokeWidth="1.2" /></svg>
          </Collapse>
        </Ribbon>
      </TopBar>

      <FormulaBar>
        <NameBox>F8<Caret /></NameBox>
        <GripSlot><GripDots c="#bdbdbd" /></GripSlot>
        <FxBox><CrossIcon /><CheckIcon /><FxText>fx</FxText></FxBox>
        <FormulaInput><DownChevronBold /></FormulaInput>
      </FormulaBar>

      <SheetRow>
        <Sheet>
          <OutlineBox $c={2} $r={2}>1</OutlineBox>
          <OutlineBox $c={2} $r={3}>2</OutlineBox>
          <OutlineBox $c={2} $r={4}>3</OutlineBox>
          <RowLevels><LevelBtn>1</LevelBtn><LevelBtn>2</LevelBtn></RowLevels>
          <Corner><CornerTri /></Corner>

          <Bracket $c="4 / 11" $r={2} $inset={52} />
          <OutlineBox $c={4} $r={2}><MinusMark /></OutlineBox>
          <Bracket $c="12 / 20" $r={2} $inset={52} />
          <OutlineBox $c={12} $r={2}><MinusMark /></OutlineBox>
          <Bracket $c="13 / 17" $r={3} $inset={52} />
          <OutlineBox $c={13} $r={3}><MinusMark /></OutlineBox>
          <Bracket $c="17 / 20" $r={3} $inset={52} />
          <OutlineBox $c={17} $r={3}><MinusMark /></OutlineBox>
          <LevelDot $c={5} $r={3} />
          <LevelDot $c={6} $r={3} />
          <LevelDot $c={18} $r={4} />
          <LevelDot $c={19} $r={4} />

          {colLetters.map((l, i) => (
            <ColHead key={l} $c={i + 3}>{l}</ColHead>
          ))}

          <RowHead $r={7}>2</RowHead>
          <RowHead $r={8}>3</RowHead>
          <RowHead $r={9}>4</RowHead>
          <RowHead $r={10}>5</RowHead>
          <RowHead $r={11}>6</RowHead>
          <RowHead $r={12} $on>8</RowHead>
          <RowHead $r={13}>9</RowHead>

          <OutlineBox $c={1} $r={8} $left={2}><MinusMark /></OutlineBox>
          <RowBracket />
          <RowDot $r={9} />
          <RowDot $r={10} />
          <RowDot $r={11} />

          <Block $c="3 / 12" $r="7 / 10" $bg="#d1d1d1" />
          <Block $c="12 / 17" $r="7 / 10" $bg="#bfbfbf" />
          <Block $c={17} $r="7 / 10" $bg={PURPLE} />
          <Block $c={18} $r="7 / 10" $bg="#bfbfbf" $lineRight />
          <Block $c={19} $r="7 / 10" $bg="#bfbfbf" />

          <VerticalLabel $c={17} $color={CYAN} $bold><span>Section 2</span></VerticalLabel>
          <VerticalLabel $c={18} $color={CRIMSON}><span>Poste 4</span></VerticalLabel>
          <VerticalLabel $c={19} $color={CRIMSON}><span>Poste 5</span></VerticalLabel>
          <Value $c={17} $r={8} $color={CYAN} $bold>2</Value>
          <Value $c={18} $r={8} $color={CRIMSON}>2,1</Value>
          <Value $c={19} $r={8} $color={CRIMSON}>2,2</Value>
          <Value $c={17} $r={9} $color={CYAN} $bold>1</Value>
          <Value $c={18} $r={9} $color={CRIMSON}>2</Value>
          <Value $c={19} $r={9} $color={CRIMSON}>2</Value>

          <TitleCell>Distribution</TitleCell>
          <Block $c="12 / 20" $r="10 / 12" $bg="#000" />
          <HeadCell $c={3} $left>Description</HeadCell>
          <HeadCell $c={4}>Item</HeadCell>
          <HeadCell $c={5}>Level</HeadCell>
          <HeadCell $c={6} $left>Option</HeadCell>

          {[12, 13].map((r, i) => (
            <React.Fragment key={r}>
              <DataCell $c={3} $r={r} $bg={CREAM} $align="right">0</DataCell>
              <DataCell $c={4} $r={r} $bg={CREAM}>{i ? "Poste 5" : "Poste 4"}</DataCell>
              <DataCell $c={5} $r={r} $bg={CREAM}>{i ? "2,2" : "2,1"}</DataCell>
              <DataCell $c={6} $r={r} $bg={CREAM} />
              <DataCell $c={8} $r={r} $bg={PINK} $align="right">0</DataCell>
              <DataCell $c={9} $r={r} $bg={PINK} $align="right">%</DataCell>
              <DataCell $c={10} $r={r} $bg={PINK} $align="right" $bold>100%</DataCell>
              <DataCell $c={11} $r={r} $bg={PINK} $bold>OK</DataCell>
              {dataCols.map((c) => (
                <DataCell key={c} $c={c} $r={r} $bg={colBg[c] || CREAM} />
              ))}
            </React.Fragment>
          ))}

          <SplitH />
          <SplitV />
          <SheetEdge />
        </Sheet>
        <VScroll>
          <VArrow><UpCaret /></VArrow>
          <VGap />
          <VThumb />
          <VArrow><Caret /></VArrow>
        </VScroll>
      </SheetRow>

      <SheetTabs>
        <NavArrows><FaintTri left /><FaintTri /></NavArrows>
        {sheetTabs.map(([t, w, on]) => (
          <SheetTab key={t} $w={w} $on={on}>{t}</SheetTab>
        ))}
        <AddSheet><PlusCircle /></AddSheet>
        <Grip><GripDots /></Grip>
        <HScroll>
          <HArrow><Tri left /></HArrow>
          <HArrow $right><Tri /></HArrow>
        </HScroll>
      </SheetTabs>

      <StatusBar>
        Mapping generation time: 924 ms
        <ViewButton $on $first><GridViewIcon /></ViewButton>
        <ViewButton><PageViewIcon /></ViewButton>
        <ViewButton><BreakViewIcon /></ViewButton>
        <ZoomControl>
          <span>−</span>
          <ZoomTrack><ZoomThumb /></ZoomTrack>
          <span>+</span>
        </ZoomControl>
        <ZoomText>100 %</ZoomText>
      </StatusBar>

      <Dialog>
        <DialogTitle>
          <TitleGlyph><WinIcon /></TitleGlyph>
          <TitleText>Branch equalizer</TitleText>
          <CloseButton><CloseX /></CloseButton>
        </DialogTitle>
        <DialogBody>
          <DialogTop>
            <NameLabel>0</NameLabel>
            <ValueInput>0</ValueInput>
            <EqualizeButton>
              <EqualizeIcon><EqualBars w={28} h={24} b={8} gap={8} /></EqualizeIcon>
              <EqualizeLabel>Equalize</EqualizeLabel>
              <EqualizeCaret><Caret c="#777" w={11} h={6} /></EqualizeCaret>
            </EqualizeButton>
          </DialogTop>
          <GridView>
            <GridRow $head>
              <HeaderCell>Depth</HeaderCell>
              <HeaderCell>Item</HeaderCell>
              <HeaderCell>Description</HeaderCell>
              <HeaderCell>Value</HeaderCell>
            </GridRow>
            {gridRows.map((r, i) => (
              <GridRow key={i}>
                <RowCell $bg={r.sel ? "#0078d7" : r.bg} $color={r.fg} $pad={r.sel ? 3 : 7}>{r.d}</RowCell>
                <RowCell $bg={r.bg} $color={r.fg}>{r.i}</RowCell>
                <RowCell $bg={r.bg} $color={r.fg}>{r.t}</RowCell>
                <RowCell $bg={r.sel ? "#0078d7" : "#fff"} $color="#000" />
              </GridRow>
            ))}
          </GridView>
        </DialogBody>
      </Dialog>
    </Page>
  );
}
